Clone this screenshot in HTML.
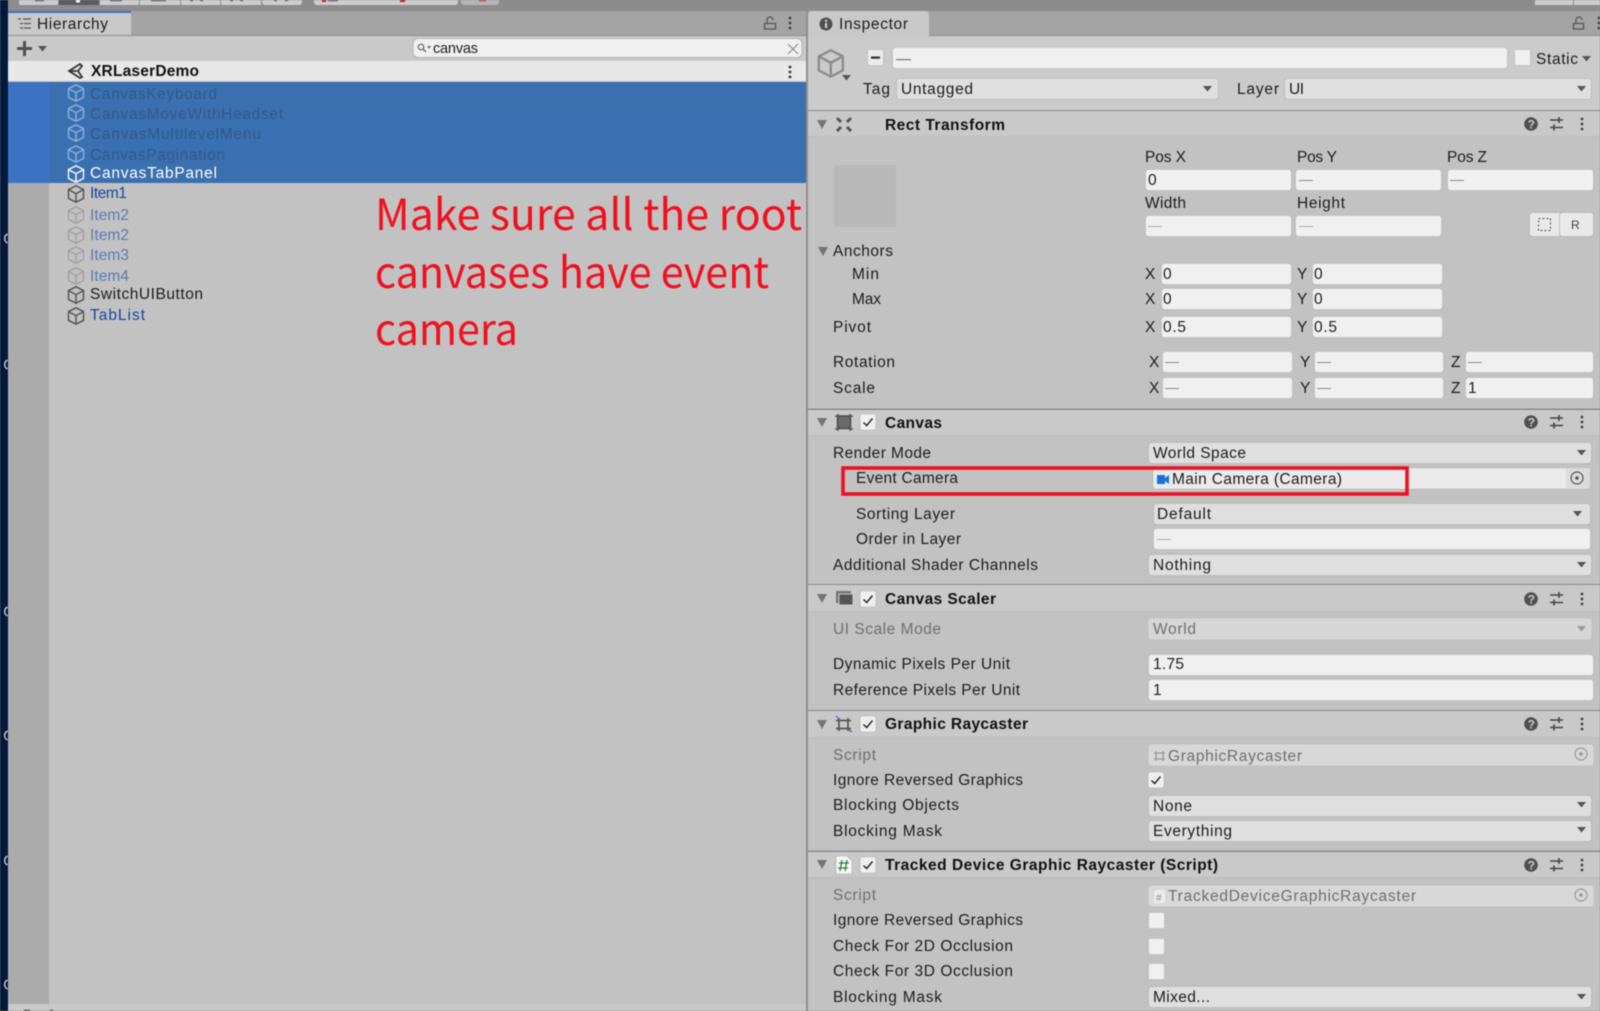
<!DOCTYPE html>
<html><head><meta charset="utf-8"><title>Unity Inspector</title>
<style>
html,body{margin:0;padding:0;background:#8c8c8c;width:1600px;height:1011px;overflow:hidden}
svg{display:block;filter:blur(.4px)}
text{font-family:"Liberation Sans",sans-serif;font-size:15.5px;fill:#1c1c1c}
.b{font-weight:bold;fill:#111}
.g{fill:#6f6f6f}
.dm{fill:#2f5a8c}
.bl{fill:#17479b}
.lb{fill:#5d7ab5}
text.red{font-family:"Noto Sans CJK JP","Liberation Sans",sans-serif;font-size:43px;fill:#f2101e}
.f{fill:#f0f0f0;stroke:#b4b4b4;stroke-width:.6}
.d{fill:#dfdfdf;stroke:#adadad;stroke-width:.6}
.h{fill:#c9c9c9}
.ln{fill:#898989}
</style></head><body>
<svg width="1600" height="1011" viewBox="0 0 1600 1011" xmlns="http://www.w3.org/2000/svg">
<defs>
<g id="cube" fill="none" stroke-width="1.5" stroke-linejoin="round"><path d="M8 0.8 15.5 4.6V13.4L8 17.2 0.5 13.4V4.6ZM0.5 4.6 8 8.6 15.5 4.6M8 8.6V17.2"/></g>
<polygon id="tri" points="0,0 10,0 5,9" fill="#757575"/>
<polygon id="ar" points="0,0 9,0 4.5,5.500" fill="#555"/>
<g id="tools">
<circle cx="0" cy="0" r="6.800" fill="#4f4f4f"/><text x="-3.400" y="4.500" style="font-size:12px;font-weight:bold;fill:#ccc">?</text>
<path d="M19 -4H32M19 3.500H32M28 -7V-1M23 0.500V6.500" stroke="#444" stroke-width="1.600" fill="none"/>
<circle cx="51" cy="-5" r="1.400" fill="#444"/><circle cx="51" cy="0" r="1.400" fill="#444"/><circle cx="51" cy="5" r="1.400" fill="#444"/>
</g>
<g id="chk"><rect width="16" height="16" rx="2" fill="#f0f0f0" stroke="#adadad" stroke-width=".6"/><path d="M3.500 8.500 6.700 11.500 12.500 4.500" stroke="#2a2a2a" stroke-width="1.500" fill="none"/></g>
<g id="tgt"><circle cx="0" cy="0" r="6" stroke-width="1.200" fill="none"/><circle cx="0" cy="0" r="1.800" stroke="none"/></g>
</defs>

<!-- backgrounds -->
<rect width="1600" height="1011" fill="#8c8c8c"/>
<rect x="0" y="0" width="8" height="1011" fill="#011a3a"/>
<g fill="none" stroke="#d8d8d8" stroke-width="1.300"><path d="M7.500 234a5 5 0 0 0 0 9"/><path d="M7.500 360a5 5 0 0 0 0 9"/><path d="M7.500 607a5 5 0 0 0 0 9"/><path d="M7.500 731a5 5 0 0 0 0 9"/><path d="M7.500 856a5 5 0 0 0 0 9"/><path d="M7.500 980a5 5 0 0 0 0 9"/></g>
<!-- top toolbar -->
<g fill="#cdcdcd">
<rect x="19" y="-4" width="39" height="9" rx="2"/><rect x="59" y="-4" width="40" height="9" fill="#5b5b5b"/><rect x="100" y="-4" width="39" height="9"/><rect x="140" y="-4" width="40" height="9"/><rect x="181" y="-4" width="39" height="9"/><rect x="221" y="-4" width="40" height="9"/><rect x="262" y="-4" width="40" height="9" rx="3"/>
<rect x="314" y="-4" width="79" height="9" rx="3"/><rect x="381" y="-4" width="77" height="9" rx="3"/><rect x="461" y="-4" width="38" height="9" rx="3" fill="#b5b5b5"/>
<rect x="1535" y="-4" width="38" height="9"/><rect x="1574" y="-4" width="26" height="9"/>
</g>
<g fill="#777"><rect x="35" y="0" width="9" height="1.500"/><rect x="110" y="0" width="12" height="1.500"/><rect x="151" y="0" width="15" height="1.500"/><rect x="190" y="0" width="3" height="1.500"/><rect x="200" y="0" width="3" height="1.500"/><rect x="230" y="0" width="3" height="1.500"/><rect x="240" y="0" width="3" height="1.500"/><rect x="274" y="0" width="3" height="1.500"/><rect x="285" y="0" width="3" height="1.500"/></g>
<rect x="76" y="0" width="4" height="2.500" fill="#fff"/>
<rect x="322" y="0" width="4" height="2" fill="#d01818"/><rect x="328" y="0" width="10" height="1.500" fill="#777"/><rect x="400" y="0" width="5" height="2" fill="#d01818"/><rect x="479" y="0" width="7" height="1.500" fill="#d05050"/>

<!-- hierarchy panel -->
<rect x="8" y="11" width="798" height="25" fill="#a4a4a4"/>
<rect x="8" y="35" width="798" height="1" fill="#8e8e8e"/>
<path d="M8 35V11H127Q131 11 131 15V35Z" fill="#c9c9c9"/>
<rect x="8" y="11" width="123" height="2" fill="#3a72c8"/>
<rect x="8" y="36" width="798" height="25" fill="#c9c9c9"/>
<path d="M18 19h3M23 19h8M20 23.500h3M24 23.500h7M20 28h3M24 28h7" stroke="#555" stroke-width="1.300" fill="none"/>
<text x="37" y="29" textLength="71" lengthAdjust="spacing">Hierarchy</text>
<path d="M767 23v-3a3 3 0 0 1 6 0M764.500 23.500h11v5.500h-11z" stroke="#555" stroke-width="1.300" fill="none"/>
<circle cx="790" cy="18" r="1.400" fill="#444"/><circle cx="790" cy="23" r="1.400" fill="#444"/><circle cx="790" cy="28" r="1.400" fill="#444"/>
<path d="M17 48.500H32M24.500 41V56" stroke="#505050" stroke-width="3" fill="none"/>
<use href="#ar" x="38" y="46" />
<rect x="413" y="38.500" width="389" height="19" rx="5" fill="#f0f0f0" stroke="#a9a9a9" stroke-width=".8"/>
<circle cx="421" cy="47" r="2.800" fill="none" stroke="#666" stroke-width="1.200"/><path d="M423 49 426 52" stroke="#666" stroke-width="1.300"/><polygon points="427,46 431,46 429,49" fill="#666"/>
<text x="433" y="53" textLength="45" lengthAdjust="spacing" style="font-size:14.500px">canvas</text>
<path d="M788 44 798 54M798 44 788 54" stroke="#8a8a8a" stroke-width="1.100"/>

<rect x="8" y="61" width="798" height="20" fill="#e8e8e8"/>
<rect x="8" y="81" width="798" height="1.500" fill="#bfbfbf"/>
<circle cx="790" cy="67" r="1.400" fill="#333"/><circle cx="790" cy="72" r="1.400" fill="#333"/><circle cx="790" cy="77" r="1.400" fill="#333"/>
<path d="M69 71 80 64 82 66 78 71 82 77 80 78ZM69 71H77" fill="none" stroke="#333" stroke-width="1.800"/>
<text x="91" y="76" textLength="108" lengthAdjust="spacing" class="b">XRLaserDemo</text>

<rect x="8" y="82" width="798" height="929" fill="#c2c2c2"/>
<rect x="8" y="82" width="41" height="922" fill="#ababab"/>
<rect x="8" y="1004" width="798" height="7" fill="#c9c9c9"/>
<rect x="8" y="82" width="798" height="101" fill="#3a70b0"/>
<rect x="8" y="82" width="41" height="101" fill="#3c72c2"/>
<path d="M24 1010.500h6M50 1010.500h3" stroke="#555" stroke-width="1.500"/>

<g stroke="#86aedb"><use href="#cube" x="68" y="84"/><use href="#cube" x="68" y="104"/><use href="#cube" x="68" y="124"/><use href="#cube" x="68" y="145"/></g>
<use href="#cube" x="68" y="165" stroke="#f2f2f2"/>
<g stroke="#575757"><use href="#cube" x="68" y="185"/><use href="#cube" x="68" y="286"/><use href="#cube" x="68" y="307"/></g>
<g stroke="#a4a4a4"><use href="#cube" x="68" y="206"/><use href="#cube" x="68" y="226"/><use href="#cube" x="68" y="246"/><use href="#cube" x="68" y="267"/></g>

<text x="90" y="99" textLength="127" lengthAdjust="spacing" class="dm">CanvasKeyboard</text>
<text x="90" y="119" textLength="193" lengthAdjust="spacing" class="dm">CanvasMoveWithHeadset</text>
<text x="90" y="139" textLength="171" lengthAdjust="spacing" class="dm">CanvasMultilevelMenu</text>
<text x="90" y="160" textLength="135" lengthAdjust="spacing" class="dm">CanvasPagination</text>
<text x="90" y="178" textLength="127" lengthAdjust="spacing" style="fill:#fff">CanvasTabPanel</text>
<text x="90" y="198" textLength="37" lengthAdjust="spacing" class="bl">Item1</text>
<text x="90" y="220" textLength="39" lengthAdjust="spacing" class="lb">Item2</text>
<text x="90" y="240" textLength="39" lengthAdjust="spacing" class="lb">Item2</text>
<text x="90" y="260" textLength="39" lengthAdjust="spacing" class="lb">Item3</text>
<text x="90" y="281" textLength="39" lengthAdjust="spacing" class="lb">Item4</text>
<text x="90" y="299" textLength="113" lengthAdjust="spacing">SwitchUIButton</text>
<text x="90" y="320" textLength="55" lengthAdjust="spacing" class="bl">TabList</text>

<text x="375" y="230" textLength="427" lengthAdjust="spacingAndGlyphs" class="red">Make sure all the root</text>
<text x="375" y="288" textLength="394" lengthAdjust="spacingAndGlyphs" class="red">canvases have event</text>
<text x="375" y="345" textLength="143" lengthAdjust="spacingAndGlyphs" class="red">camera</text>

<!-- inspector panel -->
<rect x="806" y="11" width="2" height="1000" fill="#8f8f8f"/>
<rect x="808" y="11" width="792" height="25" fill="#a4a4a4"/>
<rect x="808" y="35" width="792" height="1" fill="#8e8e8e"/>
<path d="M808 36V15Q808 11 812 11H925Q929 11 929 15V36Z" fill="#c9c9c9"/>
<rect x="808" y="36" width="792" height="975" fill="#c2c2c2"/>
<rect x="808" y="36" width="792" height="74" fill="#cbcbcb"/>
<circle cx="826" cy="24" r="6.500" fill="#4f4f4f"/><rect x="825" y="23" width="2.200" height="5" fill="#ccc"/><rect x="825" y="19.800" width="2.200" height="2" fill="#ccc"/>
<text x="839" y="29" textLength="69" lengthAdjust="spacing">Inspector</text>
<path d="M1576 23v-3a3 3 0 0 1 6 0M1573.500 23.500h10v5.500h-10z" stroke="#555" stroke-width="1.300" fill="none"/>
<circle cx="1599" cy="18" r="1.400" fill="#444"/><circle cx="1599" cy="23" r="1.400" fill="#444"/><circle cx="1599" cy="28" r="1.400" fill="#444"/>

<use href="#cube" transform="translate(818,49) scale(1.600)" stroke="#8c8c8c" style="stroke-width:.9"/>
<use href="#ar" x="842" y="75"/>
<rect x="867.500" y="49.500" width="16" height="16" rx="2" fill="#ececec" stroke="#b4b4b4" stroke-width=".6"/><rect x="871" y="56.500" width="9" height="2.200" fill="#333"/>
<rect x="892.500" y="47.500" width="615" height="21" rx="3" class="f"/>
<rect x="896" y="59" width="15" height="1.200" fill="#777"/>
<rect x="1514.500" y="49.500" width="16" height="16" rx="2" class="f"/>
<text x="1536" y="64" textLength="42" lengthAdjust="spacing">Static</text>
<use href="#ar" x="1582" y="56"/>
<text x="863" y="94" textLength="27" lengthAdjust="spacing">Tag</text>
<rect x="896.500" y="78.500" width="322" height="21" rx="3" class="d"/>
<text x="901" y="94" textLength="72" lengthAdjust="spacing">Untagged</text>
<use href="#ar" x="1203" y="86"/>
<text x="1237" y="94" textLength="42" lengthAdjust="spacing">Layer</text>
<rect x="1284.500" y="78.500" width="307" height="21" rx="3" class="d"/>
<text x="1289" y="94" textLength="15" lengthAdjust="spacing">UI</text>
<use href="#ar" x="1577" y="86"/>

<!-- Rect Transform -->
<rect x="808" y="110" width="792" height="1.500" class="ln"/>
<rect x="808" y="111" width="792" height="25" class="h"/>
<rect x="808" y="136" width="792" height="1" fill="#bcbcbc"/>
<use href="#tri" x="817" y="120"/>
<path d="M837 118l4 4M851 118l-4 4M837 131l4-4M851 131l-4-4" stroke="#555" stroke-width="3"/>
<text x="885" y="130" textLength="120" lengthAdjust="spacing" class="b">Rect Transform</text>
<use href="#tools" x="1531" y="124"/>

<rect x="834" y="165" width="62" height="62" fill="#b9b9b9"/>
<text x="1145" y="162" textLength="41" lengthAdjust="spacing">Pos X</text>
<text x="1297" y="162" textLength="40" lengthAdjust="spacing">Pos Y</text>
<text x="1447" y="162" textLength="40" lengthAdjust="spacing">Pos Z</text>
<rect x="1145.500" y="169.500" width="146" height="21" rx="3" class="f"/>
<rect x="1295.500" y="169.500" width="146" height="21" rx="3" class="f"/>
<rect x="1447.500" y="169.500" width="146" height="21" rx="3" class="f"/>
<text x="1148" y="185">0</text>
<text x="1145" y="208" textLength="41" lengthAdjust="spacing">Width</text>
<text x="1297" y="208" textLength="48" lengthAdjust="spacing">Height</text>
<rect x="1145.500" y="215.500" width="146" height="21" rx="3" class="f"/>
<rect x="1295.500" y="215.500" width="146" height="21" rx="3" class="f"/>
<rect x="1529.500" y="212.500" width="32" height="24" rx="3" fill="#e9e9e9" stroke="#aaa" stroke-width=".6"/>
<rect x="1559.500" y="212.500" width="34" height="24" rx="3" fill="#e9e9e9" stroke="#aaa" stroke-width=".6"/>
<rect x="1538.500" y="218.500" width="12" height="12" fill="none" stroke="#444" stroke-dasharray="2 2"/>
<text x="1571" y="229" style="font-size:12px;fill:#444">R</text>

<use href="#tri" x="818" y="247"/>
<text x="833" y="256" textLength="60" lengthAdjust="spacing">Anchors</text>
<text x="852" y="279" textLength="27" lengthAdjust="spacing">Min</text>
<text x="852" y="304" textLength="29" lengthAdjust="spacing">Max</text>
<text x="833" y="332" textLength="38" lengthAdjust="spacing">Pivot</text>
<text x="1145" y="279">X</text><text x="1297" y="279">Y</text>
<text x="1145" y="304">X</text><text x="1297" y="304">Y</text>
<text x="1145" y="332">X</text><text x="1297" y="332">Y</text>
<rect x="1161.500" y="263.500" width="130" height="21" rx="3" class="f"/><rect x="1312.500" y="263.500" width="130" height="21" rx="3" class="f"/>
<rect x="1161.500" y="288.500" width="130" height="21" rx="3" class="f"/><rect x="1312.500" y="288.500" width="130" height="21" rx="3" class="f"/>
<rect x="1161.500" y="316.500" width="130" height="21" rx="3" class="f"/><rect x="1312.500" y="316.500" width="130" height="21" rx="3" class="f"/>
<text x="1163" y="279">0</text><text x="1314" y="279">0</text>
<text x="1163" y="304">0</text><text x="1314" y="304">0</text>
<text x="1163" y="332" textLength="23" lengthAdjust="spacing">0.5</text><text x="1314" y="332" textLength="23" lengthAdjust="spacing">0.5</text>

<text x="833" y="367" textLength="62" lengthAdjust="spacing">Rotation</text>
<text x="833" y="393" textLength="42" lengthAdjust="spacing">Scale</text>
<text x="1149" y="367">X</text><text x="1300" y="367">Y</text><text x="1451" y="367">Z</text>
<text x="1149" y="393">X</text><text x="1300" y="393">Y</text><text x="1451" y="393">Z</text>
<rect x="1162.500" y="351.500" width="130" height="21" rx="3" class="f"/><rect x="1314.500" y="351.500" width="129" height="21" rx="3" class="f"/><rect x="1465.500" y="351.500" width="128" height="21" rx="3" class="f"/>
<rect x="1162.500" y="377.500" width="130" height="21" rx="3" class="f"/><rect x="1314.500" y="377.500" width="129" height="21" rx="3" class="f"/><rect x="1465.500" y="377.500" width="128" height="21" rx="3" class="f"/>
<text x="1468" y="393">1</text>

<!-- Canvas -->
<rect x="808" y="408.500" width="792" height="1.500" class="ln"/>
<rect x="808" y="410" width="792" height="25" class="h"/>
<rect x="808" y="435" width="792" height="1" fill="#bcbcbc"/>
<use href="#tri" x="817" y="418"/>
<rect x="837.500" y="416" width="13" height="12.500" fill="#6a6a6a" stroke="#4a4a4a" stroke-width="1.500"/><path d="M835 416h3v-2M853 416h-3v-2M835 429h3v2M853 429h-3v2" stroke="#555" stroke-width="1.500" fill="none"/>
<use href="#chk" x="860" y="414"/>
<text x="885" y="428" textLength="57" lengthAdjust="spacing" class="b">Canvas</text>
<use href="#tools" x="1531" y="422"/>

<text x="833" y="458" textLength="98" lengthAdjust="spacing">Render Mode</text>
<rect x="1148.500" y="442.500" width="443" height="21" rx="3" class="d"/>
<text x="1153" y="458" textLength="93" lengthAdjust="spacing">World Space</text>
<use href="#ar" x="1577" y="450"/>
<text x="856" y="483" textLength="102" lengthAdjust="spacing">Event Camera</text>
<rect x="1153" y="468" width="437" height="21" rx="3" fill="#ebebeb" stroke="#b4b4b4" stroke-width=".6"/>
<rect x="1566" y="468" width="24" height="20" rx="2" fill="#dcdcdc"/>
<g stroke="#555" fill="#555" transform="translate(1577,478)"><use href="#tgt"/></g>
<rect x="1157" y="475" width="8" height="9" fill="#1a70d8"/><polygon points="1165,478 1169,475 1169,484 1165,481" fill="#1a70d8"/>
<text x="1172" y="484" textLength="170" lengthAdjust="spacing">Main Camera (Camera)</text>
<rect x="843" y="468" width="564" height="26" fill="none" stroke="#ee1122" stroke-width="3.600"/>
<text x="856" y="519" textLength="99" lengthAdjust="spacing">Sorting Layer</text>
<rect x="1153.500" y="503.500" width="437" height="21" rx="3" class="d"/>
<text x="1157" y="519" textLength="54" lengthAdjust="spacing">Default</text>
<use href="#ar" x="1573" y="511"/>
<text x="856" y="544" textLength="105" lengthAdjust="spacing">Order in Layer</text>
<rect x="1153.500" y="528.500" width="437" height="21" rx="3" class="f"/>
<text x="833" y="570" textLength="205" lengthAdjust="spacing">Additional Shader Channels</text>
<rect x="1148.500" y="554.500" width="443" height="21" rx="3" class="d"/>
<text x="1153" y="570" textLength="58" lengthAdjust="spacing">Nothing</text>
<use href="#ar" x="1577" y="562"/>

<!-- Canvas Scaler -->
<rect x="808" y="584" width="792" height="1.500" class="ln"/>
<rect x="808" y="585" width="792" height="26" class="h"/>
<rect x="808" y="611" width="792" height="1" fill="#bcbcbc"/>
<use href="#tri" x="817" y="594"/>
<rect x="836" y="591" width="15" height="12" fill="#777"/><rect x="839" y="594" width="14" height="11" fill="#555" stroke="#c9c9c9"/>
<use href="#chk" x="860" y="591"/>
<text x="885" y="604" textLength="111" lengthAdjust="spacing" class="b">Canvas Scaler</text>
<use href="#tools" x="1531" y="599"/>
<text x="833" y="634" textLength="108" lengthAdjust="spacing" class="g">UI Scale Mode</text>
<rect x="1148.500" y="618.500" width="443" height="21" rx="3" fill="#d6d6d6"/>
<text x="1153" y="634" textLength="43" lengthAdjust="spacing" class="g">World</text>
<polygon points="1577,626 1586,626 1581.500,631.500" fill="#999"/>
<text x="833" y="669" textLength="177" lengthAdjust="spacing">Dynamic Pixels Per Unit</text>
<rect x="1148.500" y="654.500" width="445" height="21" rx="3" class="f"/>
<text x="1153" y="669" textLength="31" lengthAdjust="spacing">1.75</text>
<text x="833" y="695" textLength="187" lengthAdjust="spacing">Reference Pixels Per Unit</text>
<rect x="1148.500" y="679.500" width="445" height="21" rx="3" class="f"/>
<text x="1153" y="695">1</text>

<!-- Graphic Raycaster -->
<rect x="808" y="710" width="792" height="1.500" class="ln"/>
<rect x="808" y="711" width="792" height="26" class="h"/>
<rect x="808" y="737" width="792" height="1" fill="#bcbcbc"/>
<use href="#tri" x="817" y="720"/>
<path d="M839 718V731M848 718V731M836 720.500H851M836 728.500H851" fill="none" stroke="#555" stroke-width="1.700"/><path d="M836 716l3 3M849 730l3 2" stroke="#1a70d8" stroke-width="1.200"/>
<use href="#chk" x="860" y="716"/>
<text x="885" y="729" textLength="143" lengthAdjust="spacing" class="b">Graphic Raycaster</text>
<use href="#tools" x="1531" y="724"/>
<text x="833" y="760" textLength="43" lengthAdjust="spacing" class="g">Script</text>
<rect x="1148.500" y="744.500" width="445" height="21" rx="3" fill="#d8d8d8"/>
<path d="M1156 751V761M1163 751V761M1154 753H1165M1154 759H1165" fill="none" stroke="#999" stroke-width="1.200"/>
<text x="1168" y="761" textLength="134" lengthAdjust="spacing" class="g">GraphicRaycaster</text>
<g stroke="#999" fill="#999" transform="translate(1581,754)"><use href="#tgt"/></g>
<text x="833" y="785" textLength="190" lengthAdjust="spacing">Ignore Reversed Graphics</text>
<use href="#chk" x="1148" y="772"/>
<text x="833" y="810" textLength="126" lengthAdjust="spacing">Blocking Objects</text>
<rect x="1148.500" y="795.500" width="443" height="21" rx="3" class="d"/>
<text x="1153" y="811" textLength="39" lengthAdjust="spacing">None</text>
<use href="#ar" x="1577" y="802"/>
<text x="833" y="836" textLength="109" lengthAdjust="spacing">Blocking Mask</text>
<rect x="1148.500" y="820.500" width="443" height="21" rx="3" class="d"/>
<text x="1153" y="836" textLength="79" lengthAdjust="spacing">Everything</text>
<use href="#ar" x="1577" y="827"/>

<!-- Tracked -->
<rect x="808" y="850.500" width="792" height="1.500" class="ln"/>
<rect x="808" y="852" width="792" height="25" class="h"/>
<rect x="808" y="877" width="792" height="1" fill="#bcbcbc"/>
<use href="#tri" x="817" y="860"/>
<path d="M836 856h11l5 5v13h-16z" fill="#f6f6f6" stroke="#aaa" stroke-width=".6"/>
<path d="M842 860 840 871M847 860 845 871M839 863H849M838 868H848" stroke="#2a8a3a" stroke-width="1.300" fill="none"/>
<use href="#chk" x="860" y="857"/>
<text x="885" y="870" textLength="333" lengthAdjust="spacing" class="b">Tracked Device Graphic Raycaster (Script)</text>
<use href="#tools" x="1531" y="865"/>
<text x="833" y="900" textLength="43" lengthAdjust="spacing" class="g">Script</text>
<rect x="1148.500" y="885.500" width="445" height="21" rx="3" fill="#d8d8d8"/>
<rect x="1154" y="890" width="11" height="13" fill="#ececec"/>
<text x="1156" y="901" style="font-size:10px;fill:#6a9a72">#</text>
<text x="1168" y="901" textLength="248" lengthAdjust="spacing" class="g">TrackedDeviceGraphicRaycaster</text>
<g stroke="#999" fill="#999" transform="translate(1581,895)"><use href="#tgt"/></g>
<text x="833" y="925" textLength="190" lengthAdjust="spacing">Ignore Reversed Graphics</text>
<rect x="1148.500" y="912.500" width="16" height="16" rx="2" class="f"/>
<text x="833" y="951" textLength="180" lengthAdjust="spacing">Check For 2D Occlusion</text>
<rect x="1148.500" y="938.500" width="16" height="16" rx="2" class="f"/>
<text x="833" y="976" textLength="180" lengthAdjust="spacing">Check For 3D Occlusion</text>
<rect x="1148.500" y="963.500" width="16" height="16" rx="2" class="f"/>
<text x="833" y="1002" textLength="109" lengthAdjust="spacing">Blocking Mask</text>
<rect x="1148.500" y="986.500" width="443" height="21" rx="3" class="d"/>
<text x="1153" y="1002" textLength="57" lengthAdjust="spacing">Mixed...</text>
<use href="#ar" x="1577" y="994"/>

<!-- mixed-value dashes -->
<g fill="#8a8a8a"><rect x="1299" y="180" width="14" height="1"/><rect x="1450" y="180" width="14" height="1"/><rect x="1148" y="226" width="14" height="1" fill="#aaa"/><rect x="1299" y="226" width="14" height="1" fill="#aaa"/><rect x="1165" y="362" width="14" height="1"/><rect x="1317" y="362" width="14" height="1"/><rect x="1468" y="362" width="14" height="1"/><rect x="1165" y="388" width="14" height="1"/><rect x="1317" y="388" width="14" height="1"/><rect x="1157" y="539" width="14" height="1" fill="#aaa"/></g>
</svg>
</body></html>
